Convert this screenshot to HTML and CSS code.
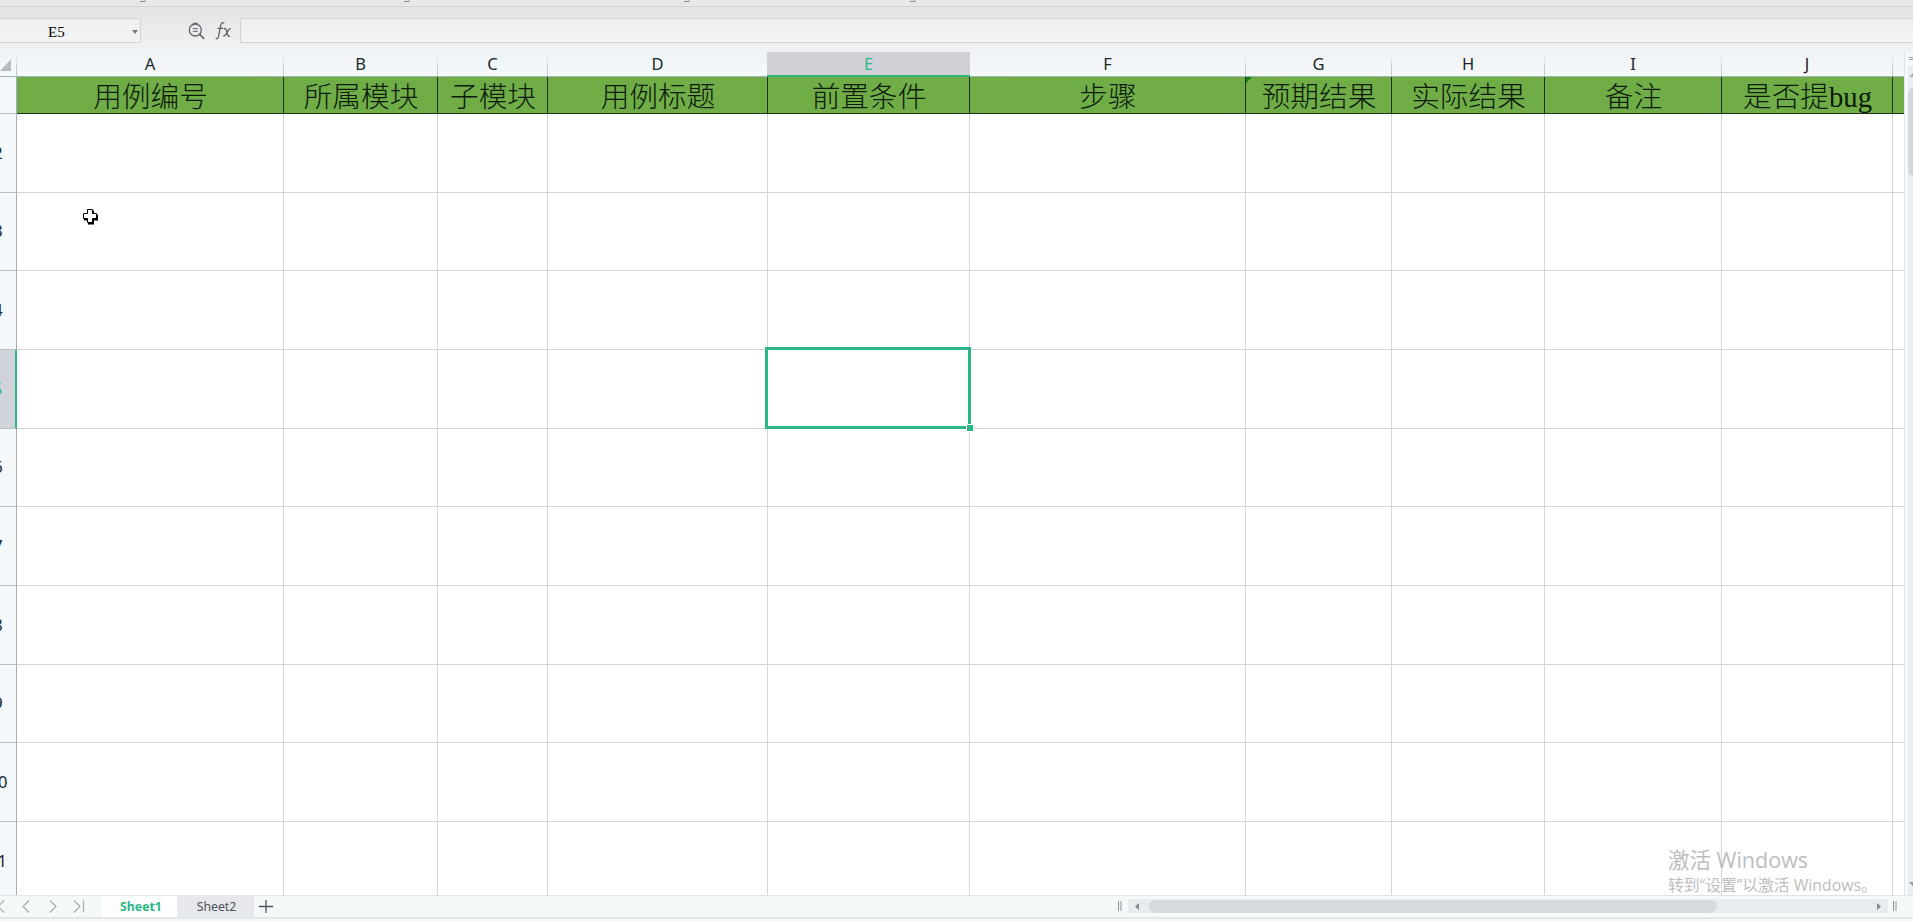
FILE: index.html
```html
<!DOCTYPE html>
<html lang="zh-CN">
<head>
<meta charset="utf-8">
<title>Sheet1</title>
<link rel="stylesheet" href="styles.css">
</head>
<body>
<div class="app">
  <div class="ribbon">
    <svg width="1000" height="6" fill="none" stroke="#8d8d8d"><path d="M140 1.500h5v-2M404 1.500h5v-2M684 1.500h5v-2M910 1.500h5v-2"/></svg>
  </div>
  <div class="formula-bar">
    <div class="name-box"><span>E5</span><i class="drop"></i></div>
    <svg class="lens" width="18" height="19" viewBox="0 0 18 19" fill="none" stroke="#62666b" stroke-width="1.3"><circle cx="7.3" cy="8" r="6"/><path d="M4.800 6.700h5M4.800 9.300h5" stroke-width="1"/><path d="M11.700 12.400l4.500 4.500" stroke-width="1.600"/><path d="M5 1.500h4.600" stroke-width="1.500"/></svg>
    <svg class="fx" width="18" height="20" viewBox="0 0 18 20" fill="none" stroke="#5c6065" stroke-width="1.3"><path d="M9.3 2.2C7.2.8 6.1 2.300 5.700 4.500L3.700 14.500C3.300 17 2.200 18.200.6 17.200M2.500 7.300h5.600M8.700 7.800c2.200-1 2.600.6 3.200 3.500.6 3.100 1.200 4.800 3.200 3.700M15.500 7.300c-2.200.3-4.400 7.800-7.300 7.900"/></svg>
    <div class="formula-input"></div>
  </div>
  <div class="main">
    <div class="sheet">
      <div class="letters">
        <div class="corner"><svg width="12" height="12"><path d="M11 0v12H0z" fill="#b9bbbe"/></svg></div>
        <div>A</div><div>B</div><div>C</div><div>D</div><div class="active">E</div><div>F</div><div>G</div><div>H</div><div>I</div><div>J</div><div></div>
      </div>
      <div class="body">
        <div class="numbers">
          <div class="first"><span>1</span></div><div><span>2</span></div><div><span>3</span></div><div><span>4</span></div><div class="active"><span>5</span></div><div><span>6</span></div><div><span>7</span></div><div><span>8</span></div><div><span>9</span></div><div><span>10</span></div><div class="final"><span>11</span></div>
        </div>
        <div class="grid">
          <div class="row title"><div>用例编号</div><div>所属模块</div><div>子模块</div><div>用例标题</div><div>前置条件</div><div>步骤</div><div class="flag">预期结果</div><div>实际结果</div><div>备注</div><div>是否提bug</div><div></div></div>
          <div class="row"><div></div><div></div><div></div><div></div><div></div><div></div><div></div><div></div><div></div><div></div><div></div></div>
          <div class="row"><div></div><div></div><div></div><div></div><div></div><div></div><div></div><div></div><div></div><div></div><div></div></div>
          <div class="row"><div></div><div></div><div></div><div></div><div></div><div></div><div></div><div></div><div></div><div></div><div></div></div>
          <div class="row"><div></div><div></div><div></div><div></div><div class="selected"><b class="outline"></b><b class="handle"></b></div><div></div><div></div><div></div><div></div><div></div><div></div></div>
          <div class="row"><div></div><div></div><div></div><div></div><div></div><div></div><div></div><div></div><div></div><div></div><div></div></div>
          <div class="row"><div></div><div></div><div></div><div></div><div></div><div></div><div></div><div></div><div></div><div></div><div></div></div>
          <div class="row"><div></div><div></div><div></div><div></div><div></div><div></div><div></div><div></div><div></div><div></div><div></div></div>
          <div class="row"><div></div><div></div><div></div><div></div><div></div><div></div><div></div><div></div><div></div><div></div><div></div></div>
          <div class="row"><div></div><div></div><div></div><div></div><div></div><div></div><div></div><div></div><div></div><div></div><div></div></div>
          <div class="row last"><div></div><div></div><div></div><div></div><div></div><div></div><div></div><div></div><div></div><div></div><div></div></div>
        </div>
      </div>
    </div>
    <div class="vscroll">
      <svg width="6" height="14" stroke="#989ca0"><path d="M1 5.500h5M1 7.500h5"/></svg>
      <div class="vtrack">
        <svg width="6" height="22"><path d="M1 11l5-5v5z" fill="#a9acb0"/></svg>
        <div class="vthumb"></div>
        <svg class="down" width="6" height="20"><path d="M1 7h5v5z" fill="#9599a0"/></svg>
      </div>
    </div>
  </div>
  <div class="tabs">
    <svg width="102" height="21" fill="none" stroke="#a7abae" stroke-width="1.2"><path d="M4 4.500L-2 10.500 4 16.500M29 4.500l-6 6 6 6M50 4.500l6 6-6 6M74 4.500l6 6-6 6M83.500 4.500v12"/></svg>
    <div class="tab current">Sheet1</div>
    <div class="tab">Sheet2</div>
    <svg class="plus" width="24" height="21" stroke="#4e5357" stroke-width="1.3"><path d="M5 10.500h14M12 4v13"/></svg>
    <svg class="grip" width="4" height="10" stroke="#8e9296"><path d="M.5 0v10M3 0v10"/></svg>
    <div class="hscroll">
      <svg width="21" height="13"><path d="M11 3v7L7 6.500z" fill="#85898d"/></svg>
      <div class="hthumb"></div>
      <svg class="right" width="21" height="13"><path d="M10 3v7l4-3.500z" fill="#85898d"/></svg>
    </div>
    <svg class="grip end" width="4" height="10" stroke="#8e9296"><path d="M.5 0v10M3 0v10"/></svg>
  </div>
  <div class="status"><i></i></div>
  <svg class="cursor" width="17" height="18" viewBox="0 0 17 18"><path d="M6 2.500h6v4h4v6h-4v4H6v-4H2v-6h4z" fill="#000"/><path d="M5.500 1.500h5v4h4v5h-4v4h-5v-4h-4v-5h4z" fill="#fff" stroke="#000"/></svg>
  <div class="watermark"><div class="wm-title">激活 Windows</div><div class="wm-note">转到<q>“</q>设置<q>”</q>以激活 Windows。</div></div>
</div>
</body>
</html>
```
FILE: styles.css
```css
* { box-sizing: border-box; }
body { margin: 0; overflow: hidden; }
svg { display: block; flex: none; }

.app {
  position: relative;
  width: 1913px;
  height: 921px;
  display: flex;
  flex-direction: column;
  overflow: hidden;
  background: linear-gradient(#e1e3e5 7px, #e6e8ea 20px, #eef0f2 44px, #f5fafc 77px);
  font-family: "Noto Sans", "Noto Sans CJK SC", sans-serif;
  color: #20252b;
}

.ribbon { height: 7px; background: #e8e8e8; border-bottom: 1px solid #d2d4d4; }

.formula-bar { height: 45px; display: flex; align-items: flex-start; padding-top: 11px; }
.name-box {
  width: 141px;
  height: 25px;
  display: flex;
  align-items: center;
  justify-content: space-between;
  padding: 3px 2px 0 48px;
  border: 1px solid #d0d2d3;
  border-left: 0;
  border-radius: 0 2px 2px 0;
  background: linear-gradient(#efefef, #f4f4f4);
  font: 15px "Liberation Serif", serif;
  color: #000;
}
.drop { border: 3px solid transparent; border-top: 4px solid #777; border-bottom: 0; }
.lens { margin: 4px 0 0 47px; }
.fx { margin: 3px 0 0 9px; }
.formula-input {
  flex: 1;
  height: 25px;
  margin-left: 7px;
  border: 1px solid #d0d2d3;
  border-right: 0;
  border-radius: 2px 0 0 2px;
  background: linear-gradient(#eeeeee, #f5f5f5);
}

.main { height: 843px; display: flex; }
.sheet { width: 1904px; overflow: hidden; }
.row { display: grid; grid-template-columns: 267px 154px 110px 220px 202px 276px 146px 153px 177px 171px 11px; }
.letters {
  display: grid;
  grid-template-columns: 17px 267px 154px 110px 220px 202px 276px 146px 153px 177px 171px 11px;
  height: 25px;
  border-bottom: 1px solid #9db9ae;
}
.letters > div {
  height: 24px;
  font-size: 16.5px;
  line-height: 23px;
  text-align: center;
  border-right: 1px solid;
  border-image: linear-gradient(transparent 10%, #c7ccd2 70%) 1;
}
.letters > div:last-child { border: 0; }
.letters .corner { padding-top: 7px; }
.letters .active {
  height: 25px;
  margin-left: -1px;
  background: #cfd1d7;
  color: #2db68a;
  border: 0;
  border-bottom: 2px solid #2eb57c;
}

.body { display: flex; height: 818px; }
.numbers, .grid { display: grid; grid-template-rows: 37px 79px 78px 79px 79px 78px 79px 79px 78px 79px 73px; }
.numbers { width: 17px; }
.numbers > div {
  display: flex;
  justify-content: center;
  align-items: center;
  width: 39px;
  margin-left: -22px;
  padding: 0 0 2px 2px;
  border-right: 1px solid #a6adb5;
  border-bottom: 1px solid #b9bfc5;
  background: #f4f8fa;
  font-size: 16.5px;
}
.numbers .first { color: #bdf8fa; }
.numbers .active { background: #d0d3d9; color: #2db68a; border-right: 2px solid #2ab886; }
.numbers .final { padding: 4px 0 0 1px; border-bottom: 0; }

.grid { background: #fff; }
.row > div { border-right: 1px solid #d5d6d8; border-bottom: 1px solid #d2d3d4; }
.row > div:last-child { border-right: 0; }
.title { background: #70ad47; }
.title > div {
  padding: 4px 0 0 1px;
  border-color: #1e3316;
  font: 300 28.7px/32px "Liberation Serif", "Noto Sans CJK SC", serif;
  color: #0c1a08;
  text-align: center;
  white-space: nowrap;
}
.title > .flag { background: linear-gradient(135deg, #147d1b 4px, transparent 4.5px); }
.selected { position: relative; }
.outline { position: absolute; inset: -3px -2px -1px -3px; border: 3px solid #2cb686; }
.handle { position: absolute; right: -4px; bottom: -3px; width: 6px; height: 6px; background: #2cb686; outline: 1px solid #fff; }
.last > div { border-bottom: 0; }

.vscroll { width: 9px; padding-left: 3px; border-left: 1px solid #dfe3e6; background: #f5f9fb; }
.vtrack { width: 6px; height: 829px; display: flex; flex-direction: column; background: #e9ecf0; }
.vthumb { height: 88px; background: #d4d7dc; border-radius: 5px 0 0 5px; }
.down { margin-top: auto; }

.tabs { height: 22px; display: flex; border-top: 1px solid #e0e4e6; background: #f5f9fa; }
.tab { width: 77px; height: 21px; padding-left: 2px; background: #e6e8ec; font-size: 12.3px; line-height: 21px; text-align: center; color: #4c5158; }
.current { width: 75px; padding-left: 3px; background: #fff; color: #2cb686; font-weight: 700; }
.grip { margin: 5px 0 0 840px; }
.hscroll { width: 760px; height: 14px; display: flex; align-items: center; margin: 3px 0 0 6px; background: #e8ecef; }
.hthumb { width: 568px; height: 13px; border-radius: 7px; background: #d6dadd; }
.right { margin-left: auto; }
.grip.end { margin-left: 5px; }
.status { height: 4px; padding-top: 2px; border-top: 2px solid #e2e7e9; background: #f4f8f9; }
.status i { display: block; width: 24px; height: 2px; margin-left: 1578px; background: #dcdfe1; }

.cursor { position: absolute; left: 82px; top: 208px; }
.watermark { position: absolute; left: 1668px; top: 844px; color: #bcbdbe; white-space: nowrap; font-family: "Open Sans", "Noto Sans CJK SC", sans-serif; }
.wm-title { font-size: 21.5px; line-height: 32px; }
.wm-note { font-size: 15.8px; line-height: 18px; }
.wm-note q { quotes: none; }
```
